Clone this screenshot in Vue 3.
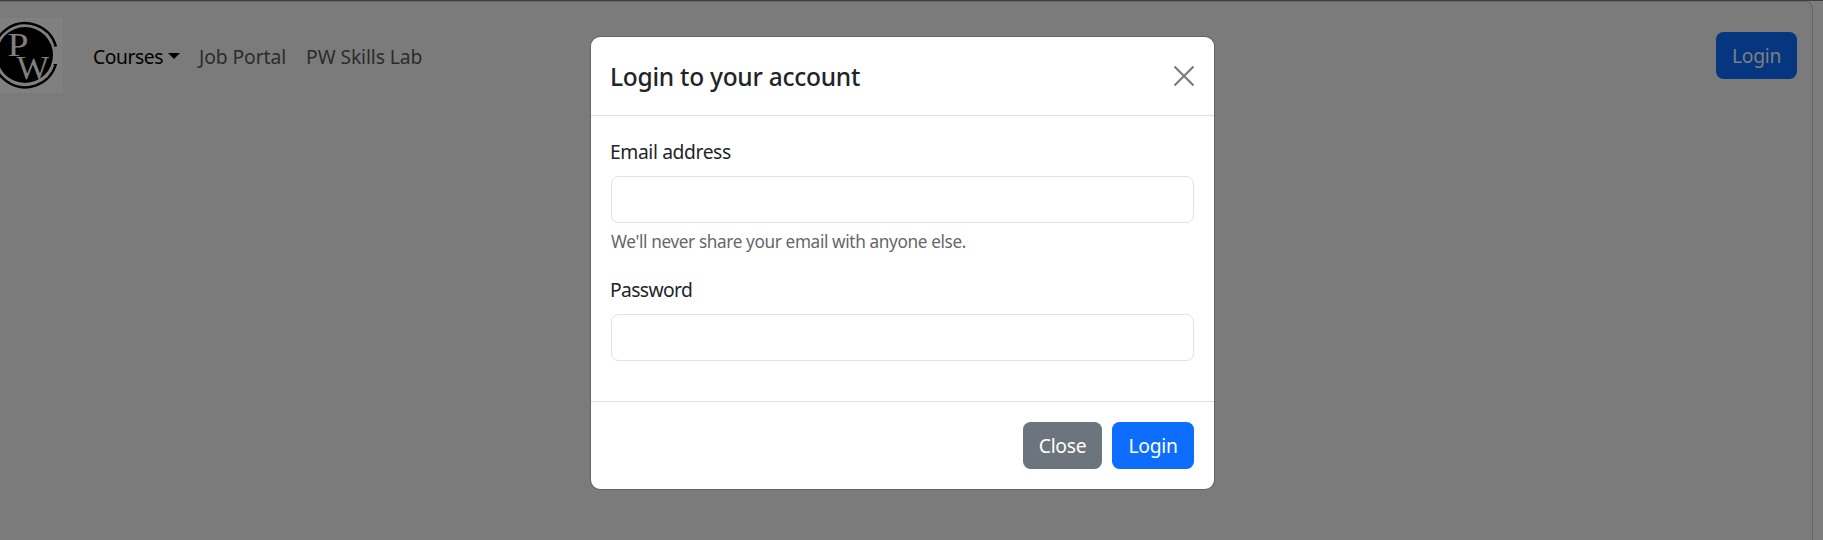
<script setup>
const links = [
  { label: 'Job Portal', cls: 'job' },
  { label: 'PW Skills Lab', cls: 'lab' },
]
</script>

<template>
  <div class="page">
    <div class="frame">
      <nav class="navbar">
        <svg class="logo" width="63" height="75" viewBox="0 0 63 75">
          <rect width="63" height="75" fill="#808080" />
          <circle cx="25" cy="37" r="28" fill="#000" />
          <path d="M55.8 28A32 32 0 1 0 55.8 46.5" fill="none" stroke="#000" stroke-width="2.4" />
          <path d="M53.5 28H57M53.5 46.5H57" stroke="#000" stroke-width="1.2" />
          <text x="7.5" y="38" class="mark" textLength="21" lengthAdjust="spacingAndGlyphs">P</text>
          <text x="16.5" y="60.5" class="mark" textLength="32.5" lengthAdjust="spacingAndGlyphs">W</text>
        </svg>
        <a class="link active"><span class="courses">Courses</span><i class="caret"></i></a>
        <a v-for="l in links" :key="l.label" class="link" :class="l.cls">{{ l.label }}</a>
        <button class="btn dim">Login</button>
      </nav>
    </div>
    <section class="modal">
      <header class="head">
        <h5 class="title">Login to your account</h5>
        <svg class="x" width="20" height="20" viewBox="0 0 20 20">
          <path d="M1.2 1.2L18.8 18.8M18.8 1.2L1.2 18.8" stroke="#7f7f7f" stroke-width="2.3" stroke-linecap="round" />
        </svg>
      </header>
      <form class="body" @submit.prevent>
        <label class="label"><span class="email">Email address</span></label>
        <input class="field" type="email" />
        <div class="help">We'll never share your email with anyone else.</div>
        <label class="label"><span class="pass">Password</span></label>
        <input class="field" type="password" />
      </form>
      <footer class="foot">
        <button class="btn grey">Close</button>
        <button class="btn blue">Login</button>
      </footer>
    </section>
  </div>
</template>

<style>
body { background: #7d7d7d; overflow: hidden; }
</style>

<style scoped>
* { box-sizing: border-box; }
.page {
  position: relative;
  height: 540px;
  overflow: hidden;
  border-top: 1px solid #3f3f3f;
  background: #7d7d7d;
  font: 400 19.3px/30px "Noto Sans", "Open Sans", sans-serif;
  color: #212529;
}
.frame {
  width: 1813px;
  height: 560px;
  border: 1px solid #656565;
  border-left: 0;
  border-radius: 0 8px 0 0;
  background: #7b7b7b;
}
.navbar { display: flex; align-items: center; height: 107px; padding-right: 15px; }
.logo { flex: none; margin-right: 30px; }
.mark { font: 34px "Liberation Serif", serif; fill: #808080; }
.link { display: flex; align-items: center; color: #2b2b2b; padding-top: 3px; margin-right: 20px; white-space: nowrap; }
.active { color: #000; margin-right: 19px; }
.courses { letter-spacing: -0.45px; }
.job { letter-spacing: -0.07px; }
.lab { letter-spacing: -0.1px; }
.caret { margin: -3px 0 0 5px; border: 6px solid transparent; border-top-color: #000; border-bottom: 0; }
.btn {
  height: 47px;
  border: 0;
  border-radius: 7.5px;
  padding: 1px 0 0;
  font: inherit;
  letter-spacing: -0.3px;
  color: #fff;
}
.dim { width: 81px; margin-left: auto; background: #06367f; color: #808080; }
.modal {
  position: absolute;
  left: 591px;
  top: 36px;
  width: 623px;
  height: 452px;
  border-radius: 9px;
  background: #fff;
  box-shadow: 0 0 0 1px #646464;
}
.head {
  display: flex;
  align-items: center;
  justify-content: space-between;
  height: 79px;
  padding: 0 20px;
  border-bottom: 1px solid #dee2e6;
}
.title { margin: 0 0 0 -1px; padding-top: 2px; font-size: 24.5px; font-weight: 500; letter-spacing: -0.26px; }
.body { display: flex; flex-direction: column; height: 285px; padding: 21px 20px 0; }
.label { height: 30px; margin: 0 0 9px -1px; }
.email { letter-spacing: -0.4px; }
.pass { letter-spacing: -0.62px; }
.field {
  width: 583px;
  height: 47px;
  margin: 0;
  border: 1px solid #dee2e6;
  border-radius: 7.5px;
  background: #fff;
  outline: none;
}
.help {
  height: 26px;
  margin: 5px 0 21px;
  font-size: 17.2px;
  line-height: 27px;
  letter-spacing: -0.37px;
  color: #64676a;
  white-space: nowrap;
}
.foot {
  display: flex;
  justify-content: flex-end;
  gap: 10px;
  height: 88px;
  padding: 20px;
  border-top: 1px solid #dee2e6;
}
.grey { width: 79px; background: #6c757d; }
.blue { width: 82px; background: #0d6efd; }
</style>
